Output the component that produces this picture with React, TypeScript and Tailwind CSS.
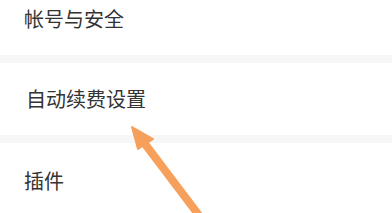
export default function App() {
  const rows = ['帐号与安全', '自动续费设置', '插件'];

  return (
    <div
      className="relative w-[392px] h-[213px] overflow-hidden bg-white text-[#333333]"
      style={{ fontFamily: '"Noto Sans CJK SC", "Noto Sans", sans-serif' }}
    >
      {/* Settings list */}
      <div className="flex flex-col h-full">
        <div className="h-[55px] pt-[8px] pl-[24px] text-[20px] leading-[22px]">{rows[0]}</div>
        <div className="h-[8px] bg-[#f7f7f7]" />
        <div className="h-[72px] flex items-center pl-[26px] text-[20px] leading-[22px]">{rows[1]}</div>
        <div className="h-[8px] bg-[#f7f7f7]" />
        <div className="flex-1 flex items-center pl-[24px] pt-[6px] text-[20px] leading-[22px]">{rows[2]}</div>
      </div>

      {/* Annotation arrow */}
      <svg className="absolute left-0 top-0" width="392" height="213" viewBox="0 0 392 213">
        <line x1="204" y1="222" x2="142" y2="140" stroke="#f7a05c" strokeWidth="8" strokeLinecap="round" />
        <polygon points="132,127 153,139 138,149" fill="#f7a05c" stroke="#f7a05c" strokeWidth="2" strokeLinejoin="round" />
      </svg>
    </div>
  );
}
